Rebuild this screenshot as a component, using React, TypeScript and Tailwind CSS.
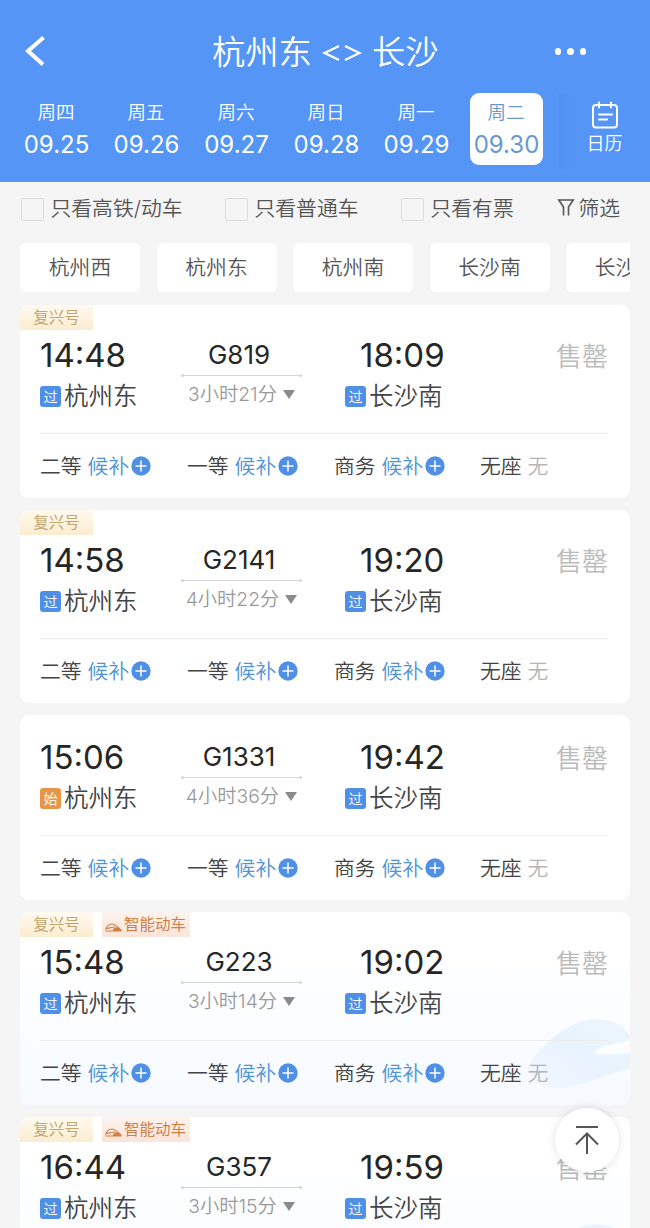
import { clsx } from 'clsx';

type Train = {
  no: string;
  depart: string;
  arrive: string;
  duration: string;
  origin?: boolean;
  fuxing?: boolean;
  smart?: boolean;
};

const DAYS = [
  { week: '周四', date: '09.25' },
  { week: '周五', date: '09.26' },
  { week: '周六', date: '09.27' },
  { week: '周日', date: '09.28' },
  { week: '周一', date: '09.29' },
  { week: '周二', date: '09.30', active: true },
];

const STATIONS = ['杭州西', '杭州东', '杭州南', '长沙南', '长沙西'];

const TRAINS: Train[] = [
  { no: 'G819', depart: '14:48', arrive: '18:09', duration: '3小时21分', fuxing: true },
  { no: 'G2141', depart: '14:58', arrive: '19:20', duration: '4小时22分', fuxing: true },
  { no: 'G1331', depart: '15:06', arrive: '19:42', duration: '4小时36分', origin: true },
  { no: 'G223', depart: '15:48', arrive: '19:02', duration: '3小时14分', fuxing: true, smart: true },
  { no: 'G357', depart: '16:44', arrive: '19:59', duration: '3小时15分', fuxing: true, smart: true },
];

const SEATS = ['二等', '一等', '商务'];

function Header() {
  return (
    <header className="h-[182px] bg-[#5595f6] text-white">
      <div className="flex h-[93px] items-center pt-[9px] pl-[24px] pr-[64px]">
        <svg className="h-[32px] w-[24px]" viewBox="0 0 24 32" fill="none" stroke="currentColor" strokeWidth="4">
          <path d="M19.5 2.5 4 16l15 13.5" />
        </svg>
        <h1 className="ml-[164px] flex items-center pt-[3px] text-[33.3px] leading-none font-[350] whitespace-nowrap">
          杭州东
          <svg className="mx-[10px] mt-[2px] h-[18px] w-[40px]" viewBox="0 0 40 18" fill="none" stroke="currentColor" strokeWidth="2.3">
            <path d="M17 2 2.5 9 17 16M23 2l14.500 7L23 16" />
          </svg>
          长沙
        </h1>
        <div className="ml-auto flex gap-[6px]">
          <i className="h-[7px] w-[6.500px] rounded-full bg-white" />
          <i className="h-[7px] w-[6.500px] rounded-full bg-white" />
          <i className="h-[7px] w-[6.500px] rounded-full bg-white" />
        </div>
      </div>

      <div className="flex pl-[20px]">
        <div className="flex gap-[17px]">
          {DAYS.map((d) => (
            <div
              key={d.date}
              className={clsx(
                'flex h-[72px] w-[73px] flex-col items-center rounded-[9px]',
                d.active && 'bg-white text-[#6798cf]'
              )}
            >
              <span className="mt-[6px] -ml-[1px] h-[26px] text-[18.500px] leading-[26px] font-[350]">{d.week}</span>
              <span className="mt-[5px] h-[30px] text-[24px] leading-[30px]">{d.date}</span>
            </div>
          ))}
        </div>
        <div className="ml-[15px] flex h-[76px] flex-1 flex-col items-center bg-linear-to-r from-[#5291f3] to-[#5595f6] to-15% pl-[1px]">
          <svg className="mt-[8px] h-[28px] w-[28px]" viewBox="0 0 28 28" fill="none" stroke="currentColor" strokeWidth="2" strokeLinecap="round">
            <rect x="2" y="4" width="24" height="22.500" rx="3" />
            <path d="M8 1.500v5M20 1.500v5M8 13.500h13M8 18.500h8" />
          </svg>
          <span className="mt-[2px] h-[26px] text-[18px] leading-[26px] font-[350]">日历</span>
        </div>
      </div>
    </header>
  );
}

function Check({ label }: { label: string }) {
  return (
    <div className="flex items-center gap-[7px]">
      <i className="h-[23px] w-[23px] rounded-[2px] border-[1.500px] border-[#dcdcdc]" />
      <span>{label}</span>
    </div>
  );
}

function Filters() {
  return (
    <div className="flex h-[54px] items-center pl-[20.500px] text-[20.800px] leading-none font-[350] whitespace-nowrap text-[#555]">
      <div className="w-[204px]">
        <Check label="只看高铁/动车" />
      </div>
      <div className="w-[176px]">
        <Check label="只看普通车" />
      </div>
      <div className="w-[156px]">
        <Check label="只看有票" />
      </div>
      <div className="flex items-center gap-[4px]">
        <svg className="-mt-[3px] h-[19px] w-[18px]" viewBox="0 0 18 19" fill="none" stroke="#555" strokeWidth="1.600">
          <path d="M6.500 17.500V9L1.800 2h14.400L11.500 9v8.500" />
        </svg>
        筛选
      </div>
    </div>
  );
}

function Badge({ origin }: { origin?: boolean }) {
  return (
    <span
      className={clsx(
        'flex h-[21px] w-[21px] items-center justify-center rounded-[3px] pt-[2px] text-[14px] leading-none font-[350] text-white',
        origin ? 'bg-[#e6964a]' : 'bg-[#4f90e6]'
      )}
    >
      {origin ? '始' : '过'}
    </span>
  );
}

function Stop({ time, name, origin, end }: { time: string; name: string; origin?: boolean; end?: boolean }) {
  return (
    <div>
      <div className={clsx('h-[28px] text-[33px] leading-[28px] text-[#262626]', end && 'pl-[15px]')}>{time}</div>
      <div className="mt-[13px] flex h-[28px] items-center gap-[3px] text-[24.500px] leading-none font-[350] text-[#444]">
        <Badge origin={origin} />
        <span className="pt-[1px]">{name}</span>
      </div>
    </div>
  );
}

// Pale bullet train in the corner of the smart EMU cards
function TrainArt() {
  return (
    <svg className="absolute right-0 bottom-0 h-[90px] w-[110px]" viewBox="0 0 110 90" fill="none">
      <defs>
        <linearGradient id="art" x1="0" y1="1" x2="1" y2="0">
          <stop offset="0" stopColor="#eaf2fe" stopOpacity="0.400" />
          <stop offset="0.500" stopColor="#e9f3fe" />
          <stop offset="1" stopColor="#ebf6fd" />
        </linearGradient>
      </defs>
      <path d="M110 20C98 4 76 0 52 10 34 20 16 36 10 50c-4 14 8 22 34 24 26-6 44-16 66-20Z" fill="url(#art)" />
      <path d="M74 38c2-4 12-9 36-12v12c-16 1-26 3-36 0Z" fill="#fff" fillOpacity="0.800" />
    </svg>
  );
}

function TrainCard({ train }: { train: Train }) {
  return (
    <section
      className={clsx(
        'relative overflow-hidden rounded-[9px]',
        train.smart ? 'bg-linear-to-b from-white from-20% to-[#f6faff]' : 'bg-white'
      )}
    >
      {train.smart && <TrainArt />}
      <div className="relative">
        {train.fuxing ? (
          <div className="flex h-[25px] gap-[9px] text-[15.500px] leading-[25px] whitespace-nowrap">
            <span className="w-[73px] bg-linear-to-b from-[#fffaf0] to-[#fcecd0] text-center text-[#c2a66f]">复兴号</span>
            {train.smart && (
              <span className="flex w-[88px] items-center bg-linear-to-b from-[#fdf3ee] to-[#fbe4d8] pl-[3px] text-[#cf8049]">
                <svg className="mt-[5px] mr-[2px] h-[10px] w-[17px] shrink-0" viewBox="0 0 17 10" fill="none" stroke="currentColor" strokeWidth="1.100">
                  <path d="M.8 8C1 5 3.500 2 7 2c3 0 5 3 9 6v1H.5" />
                  <path d="M1.500 6.500C4 6.500 6 5 10 5" />
                  <path d="M9 5.500h4.500l3 3.500H7.500Z" fill="currentColor" stroke="none" />
                </svg>
                智能动车
              </span>
            )}
          </div>
        ) : (
          <div className="h-[17px]" />
        )}

        <div className="mr-[22px] ml-[20px] flex h-[104px] border-b border-[#ececec] pt-[11px]">
          <div className="w-[141px]">
            <Stop time={train.depart} name="杭州东" origin={train.origin} />
          </div>
          <div className="flex w-[121px] flex-col items-center">
            <div className="-ml-[5px] h-[28px] text-[26px] leading-[28px] text-[#262626]">{train.no}</div>
            <div className="mt-[5px] flex w-full items-center">
              <i className="h-[3px] w-[3px] rounded-full bg-[#d6d6d6]" />
              <i className="h-px flex-1 bg-[#d6d6d6]" />
              <i className="h-[3px] w-[3px] rounded-full bg-[#d6d6d6]" />
            </div>
            <div className="mt-[5px] flex h-[24px] items-center text-[19.300px] leading-none font-[350] whitespace-nowrap text-[#999]">
              <span className="pt-[2px]">{train.duration}</span>
              <svg className="ml-[6px] h-[9px] w-[12px]" viewBox="0 0 12 9" fill="#8a8a8a">
                <path d="M0 0h12L6 9Z" />
              </svg>
            </div>
          </div>
          <div className="ml-[43px]">
            <Stop time={train.arrive} name="长沙南" end />
          </div>
          <div className="ml-auto h-[30px] pt-[1px] text-[26px] leading-[30px] font-[350] text-[#bbb]">售罄</div>
        </div>

        <div className="grid h-[64px] grid-cols-[147px_147px_146px_1fr] items-center pl-[20px] text-[20.800px] leading-none font-[350] text-[#444]">
          {SEATS.map((seat) => (
            <div key={seat} className="flex items-center">
              <span className="pt-[2px]">{seat}</span>
              <span className="ml-[6px] pt-[2px] text-[#4f94d4]">候补</span>
              <svg className="ml-[2px] h-[20px] w-[20px]" viewBox="0 0 20 20">
                <circle cx="10" cy="10" r="9.700" fill="#4f90e6" />
                <path d="M4.500 10h11M10 4.500v11" stroke="#fff" strokeWidth="1.500" />
              </svg>
            </div>
          ))}
          <div className="pt-[2px]">
            无座<span className="ml-[6px] text-[#b5b5b5]">无</span>
          </div>
        </div>
      </div>
    </section>
  );
}

export default function App() {
  return (
    <div className="relative h-[1228px] w-[650px] overflow-hidden bg-[#f5f5f5] font-['Inter','Noto_Sans_CJK_SC',sans-serif]">
      <Header />
      <Filters />
      <div className="mx-[20px] mt-[7px] flex gap-[16.500px] overflow-hidden">
        {STATIONS.map((s) => (
          <div
            key={s}
            className="flex h-[49px] w-[120px] shrink-0 items-center justify-center rounded-[6px] bg-white pt-[1px] text-[20.800px] leading-none font-[350] text-[#555]"
          >
            {s}
          </div>
        ))}
      </div>
      <main className="mx-[20px] mt-[13px] flex flex-col gap-[12px]">
        {TRAINS.map((t) => (
          <TrainCard key={t.no} train={t} />
        ))}
      </main>
      <button
        className="absolute top-[1108px] left-[555px] flex h-[64px] w-[64px] items-center justify-center rounded-full bg-white shadow-[0_0_10px_rgba(0,0,0,0.12)]"
        title="回到顶部"
      >
        <svg className="h-[30px] w-[26px]" viewBox="0 0 26 30" fill="none" stroke="#555" strokeWidth="2">
          <path d="M2 2h22M13 29V8M2 19.500 13 8.500l11 11" />
        </svg>
      </button>
    </div>
  );
}
